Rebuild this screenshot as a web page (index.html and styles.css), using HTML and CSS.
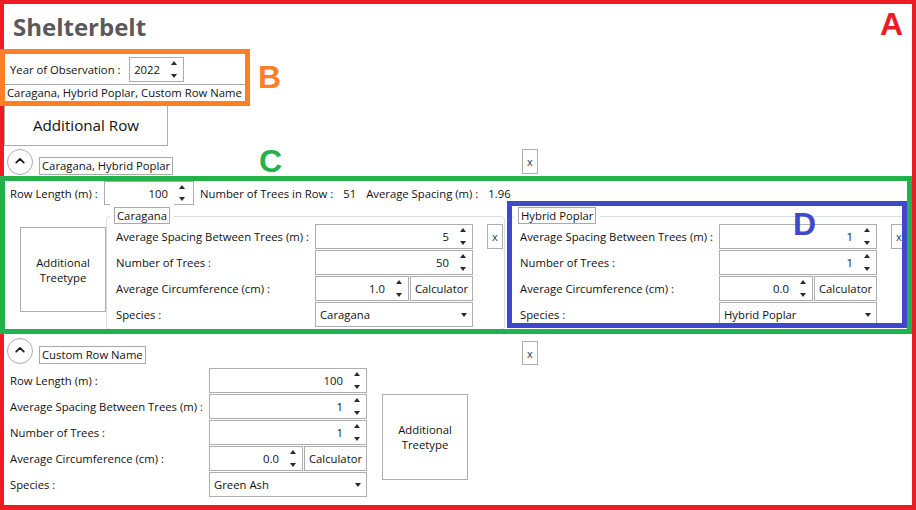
FILE: index.html
```html
<!DOCTYPE html>
<html lang="en">
<head>
<meta charset="utf-8">
<title>Shelterbelt</title>
<link rel="stylesheet" href="styles.css">
</head>
<body>
<div class="page">
  <h1 class="title">Shelterbelt</h1>

  <div class="year-row">
    <span class="year-lbl">Year of Observation :</span>
    <div class="num year-num"><span class="val">2022</span><span class="spin"><i class="up"></i><i class="dn"></i></span></div>
  </div>
  <div class="names">Caragana, Hybrid Poplar, Custom Row Name</div>

  <button class="btn add-row">Additional Row</button>

  <section class="row">
    <div class="row-head">
      <span class="toggle"><svg width="26" height="26" viewBox="0 0 26 26"><path d="M9.2 13.6 L13 9.8 L16.8 13.6" fill="none" stroke="#1a1a1a" stroke-width="1.7" stroke-linecap="round" stroke-linejoin="round"/></svg></span>
      <span class="row-name">Caragana, Hybrid Poplar</span>
      <button class="btn close">x</button>
    </div>
    <div class="row-body">
      <div class="row-line">
        <span class="rl-lbl">Row Length (m) :</span>
        <div class="num rl-num"><span class="val">100</span><span class="spin"><i class="up"></i><i class="dn"></i></span></div>
        <span class="info info-1">Number of Trees in Row :</span>
        <span class="info info-2">51</span>
        <span class="info info-3">Average Spacing (m) :</span>
        <span class="info info-4">1.96</span>
      </div>
      <div class="tree-area">
        <button class="btn add-tree">Additional<br>Treetype</button>

        <div class="group">
          <div class="legend-wrap"><span class="legend">Caragana</span></div>
          <div class="group-inner">
            <div class="form">
              <span class="lbl">Average Spacing Between Trees (m) :</span>
              <div class="num"><span class="val">5</span><span class="spin"><i class="up"></i><i class="dn"></i></span></div>
              <span class="lbl">Number of Trees :</span>
              <div class="num"><span class="val">50</span><span class="spin"><i class="up"></i><i class="dn"></i></span></div>
              <span class="lbl">Average Circumference (cm) :</span>
              <div class="circ">
                <div class="num circ-num"><span class="val">1.0</span><span class="spin"><i class="up"></i><i class="dn"></i></span></div>
                <button class="btn calc">Calculator</button>
              </div>
              <span class="lbl">Species :</span>
              <div class="combo"><span>Caragana</span><i class="dn"></i></div>
            </div>
            <button class="btn close tree-close">x</button>
          </div>
        </div>

        <div class="group group-2">
          <div class="legend-wrap"><span class="legend">Hybrid Poplar</span></div>
          <div class="group-inner">
            <div class="form">
              <span class="lbl">Average Spacing Between Trees (m) :</span>
              <div class="num"><span class="val">1</span><span class="spin"><i class="up"></i><i class="dn"></i></span></div>
              <span class="lbl">Number of Trees :</span>
              <div class="num"><span class="val">1</span><span class="spin"><i class="up"></i><i class="dn"></i></span></div>
              <span class="lbl">Average Circumference (cm) :</span>
              <div class="circ">
                <div class="num circ-num"><span class="val">0.0</span><span class="spin"><i class="up"></i><i class="dn"></i></span></div>
                <button class="btn calc">Calculator</button>
              </div>
              <span class="lbl">Species :</span>
              <div class="combo"><span>Hybrid Poplar</span><i class="dn"></i></div>
            </div>
            <button class="btn close tree-close">x</button>
          </div>
        </div>
      </div>
    </div>
  </section>

  <section class="row row-2">
    <div class="row-head">
      <span class="toggle"><svg width="26" height="26" viewBox="0 0 26 26"><path d="M9.2 13.6 L13 9.8 L16.8 13.6" fill="none" stroke="#1a1a1a" stroke-width="1.7" stroke-linecap="round" stroke-linejoin="round"/></svg></span>
      <span class="row-name">Custom Row Name</span>
      <button class="btn close close-low">x</button>
    </div>
    <div class="row-body single">
      <div class="form single-form">
        <span class="lbl">Row Length (m) :</span>
        <div class="num"><span class="val">100</span><span class="spin"><i class="up"></i><i class="dn"></i></span></div>
        <span class="lbl">Average Spacing Between Trees (m) :</span>
        <div class="num"><span class="val">1</span><span class="spin"><i class="up"></i><i class="dn"></i></span></div>
        <span class="lbl">Number of Trees :</span>
        <div class="num"><span class="val">1</span><span class="spin"><i class="up"></i><i class="dn"></i></span></div>
        <span class="lbl">Average Circumference (cm) :</span>
        <div class="circ">
          <div class="num circ-num"><span class="val">0.0</span><span class="spin"><i class="up"></i><i class="dn"></i></span></div>
          <button class="btn calc">Calculator</button>
        </div>
        <span class="lbl">Species :</span>
        <div class="combo"><span>Green Ash</span><i class="dn"></i></div>
      </div>
      <button class="btn add-tree add-tree-2">Additional<br>Treetype</button>
    </div>
  </section>
</div>

<div class="annot annot-a"></div>
<div class="annot annot-b"></div>
<div class="annot annot-c"></div>
<div class="annot annot-d"></div>
<span class="tag tag-a">A</span>
<span class="tag tag-b">B</span>
<span class="tag tag-c">C</span>
<span class="tag tag-d">D</span>
</body>
</html>
```

FILE: styles.css
```css
* { box-sizing: border-box; }

html, body {
  margin: 0;
  padding: 0;
  background: #ffffff;
}

body {
  position: relative;
  width: 916px;
  height: 510px;
  overflow: hidden;
  font-family: "Open Sans", "Noto Sans", sans-serif;
  font-size: 11.3px;
  color: #111111;
}

.page {
  padding: 11px 4px 0 4px;
}

.title {
  margin: 0 0 0 9px;
  height: 31px;
  font-size: 24px;
  line-height: 31px;
  font-weight: 700;
  color: #5a5a5a;
}

/* generic controls */
.btn {
  display: block;
  margin: 0;
  padding: 0;
  border: 1px solid #adadad;
  background: #ffffff;
  font-family: inherit;
  font-size: inherit;
  color: #111111;
  line-height: 15px;
}

.num {
  display: flex;
  align-items: stretch;
  justify-content: flex-end;
  height: 25px;
  padding-right: 1px;
  border: 1px solid #abadb3;
  background: #ffffff;
}

.num .val {
  align-self: center;
  margin-right: 6px;
  line-height: 15px;
}

.spin {
  display: flex;
  flex-direction: column;
  justify-content: space-between;
  align-items: center;
  width: 16px;
  padding: 3px 0 3px 0;
}

.up, .dn {
  display: block;
  width: 0;
  height: 0;
  border-left: 3px solid transparent;
  border-right: 3px solid transparent;
}

.up { border-bottom: 4px solid #2a2a2a; }
.dn { border-top: 4px solid #2a2a2a; }

/* year */
.year-row {
  display: flex;
  align-items: center;
  height: 25px;
  margin-top: 15px;
}

.year-lbl {
  width: 125px;
  padding-left: 6px;
}

.year-num {
  width: 55px;
}

.names {
  width: 242px;
  height: 18px;
  margin-top: 2px;
  padding-left: 2px;
  border: 1px solid #a9a9a9;
  line-height: 16px;
  white-space: nowrap;
}

.add-row {
  width: 164px;
  height: 42px;
  margin-top: 2px;
  font-size: 15.2px;
  line-height: 20px;
}

/* row header */
.row-head {
  display: grid;
  grid-template-columns: 32px 486px 16px;
  align-items: start;
  height: 26px;
  margin-top: 3px;
}

.toggle {
  display: block;
  width: 26px;
  height: 26px;
  margin-left: 3px;
  border: 1px solid #ababab;
  border-radius: 50%;
}

.toggle svg {
  display: block;
  margin: -1px 0 0 -1px;
}

.row-name {
  justify-self: start;
  height: 18px;
  margin: 8px 0 0 3px;
  padding: 0 2px;
  border: 1px solid #a9a9a9;
  line-height: 16px;
  white-space: nowrap;
}

.close {
  width: 16px;
  height: 25px;
  font-size: 11px;
  color: #333344;
}

.close-low {
  margin-top: 3px;
  height: 24px;
}

/* row 1 body */
.row-line {
  display: flex;
  align-items: center;
  height: 24px;
  margin-top: 6px;
  white-space: nowrap;
}

.rl-lbl {
  width: 100px;
  padding-left: 6px;
}

.rl-num {
  width: 90px;
  height: 24px;
  padding-right: 3px;
}

.info-1 { margin-left: 6px; }
.info-2 { margin-left: 10px; }
.info-3 { margin-left: 10px; }
.info-4 { margin-left: 10px; }

.tree-area {
  display: flex;
  align-items: flex-start;
  margin-top: 11px;
}

.add-tree {
  width: 86px;
  height: 85px;
  margin: 11px 0 0 16px;
}

.group {
  width: 399px;
  padding: 0 1px 2px 9px;
  border: 1px solid #d5dfe5;
  border-radius: 4px;
}

.group-2 {
  margin-left: 5px;
}

.legend-wrap {
  display: flex;
  height: 17px;
  margin: -10px 0 0 -2px;
}

.legend {
  height: 17px;
  padding: 0 2px;
  border: 1px solid #a9a9a9;
  background: #ffffff;
  box-shadow: 0 0 0 4px #ffffff;
  line-height: 15px;
  white-space: nowrap;
}

.group-inner {
  display: flex;
  align-items: flex-start;
}

.form {
  display: grid;
  grid-template-columns: 199px 158px;
  grid-auto-rows: 25px;
  row-gap: 1px;
  align-items: center;
}

.lbl {
  white-space: nowrap;
  line-height: 15px;
}

.form .num,
.form .circ,
.form .combo {
  height: 25px;
}

.circ {
  display: flex;
  gap: 1px;
}

.circ-num {
  width: 94px;
}

.calc {
  width: 63px;
  height: 25px;
}

.combo {
  display: flex;
  align-items: center;
  justify-content: space-between;
  padding: 0 5px 0 4px;
  border: 1px solid #abadb3;
  background: #ffffff;
  line-height: 15px;
}

.combo .dn {
  border-left-width: 3.5px;
  border-right-width: 3.5px;
}

.tree-close {
  margin-left: 14px;
}

/* row 2 */
.row-2 .row-head {
  margin-top: 8px;
}

.row-body.single {
  display: flex;
  align-items: flex-start;
  padding: 4px 0 0 6px;
}

.add-tree-2 {
  margin: 26px 0 0 15px;
  height: 86px;
}

/* annotation overlays */
.annot {
  position: absolute;
  border-style: solid;
  pointer-events: none;
}

.annot-a {
  left: 0;
  top: 0;
  width: 916px;
  height: 510px;
  border-width: 4px 4px 5px 4px;
  border-color: #ed1c24;
}

.annot-b {
  left: 0;
  top: 49px;
  width: 250px;
  height: 57px;
  border-width: 5px;
  border-color: #ff7f27;
}

.annot-c {
  left: 0;
  top: 176px;
  width: 912px;
  height: 158px;
  border-width: 5px;
  border-color: #22b14c;
}

.annot-d {
  left: 507px;
  top: 201px;
  width: 400px;
  height: 127px;
  border-width: 5px;
  border-color: #3f48cc;
}

.tag {
  position: absolute;
  font-family: "Liberation Sans", Arial, sans-serif;
  font-weight: 700;
  font-size: 32px;
  line-height: 32px;
}

.tag-a { left: 880px; top: 8px; color: #ed1c24; }
.tag-b { left: 258px; top: 61px; color: #ff7f27; }
.tag-c { left: 259px; top: 145px; color: #22b14c; }
.tag-d { left: 793px; top: 208px; color: #3f48cc; }
```
